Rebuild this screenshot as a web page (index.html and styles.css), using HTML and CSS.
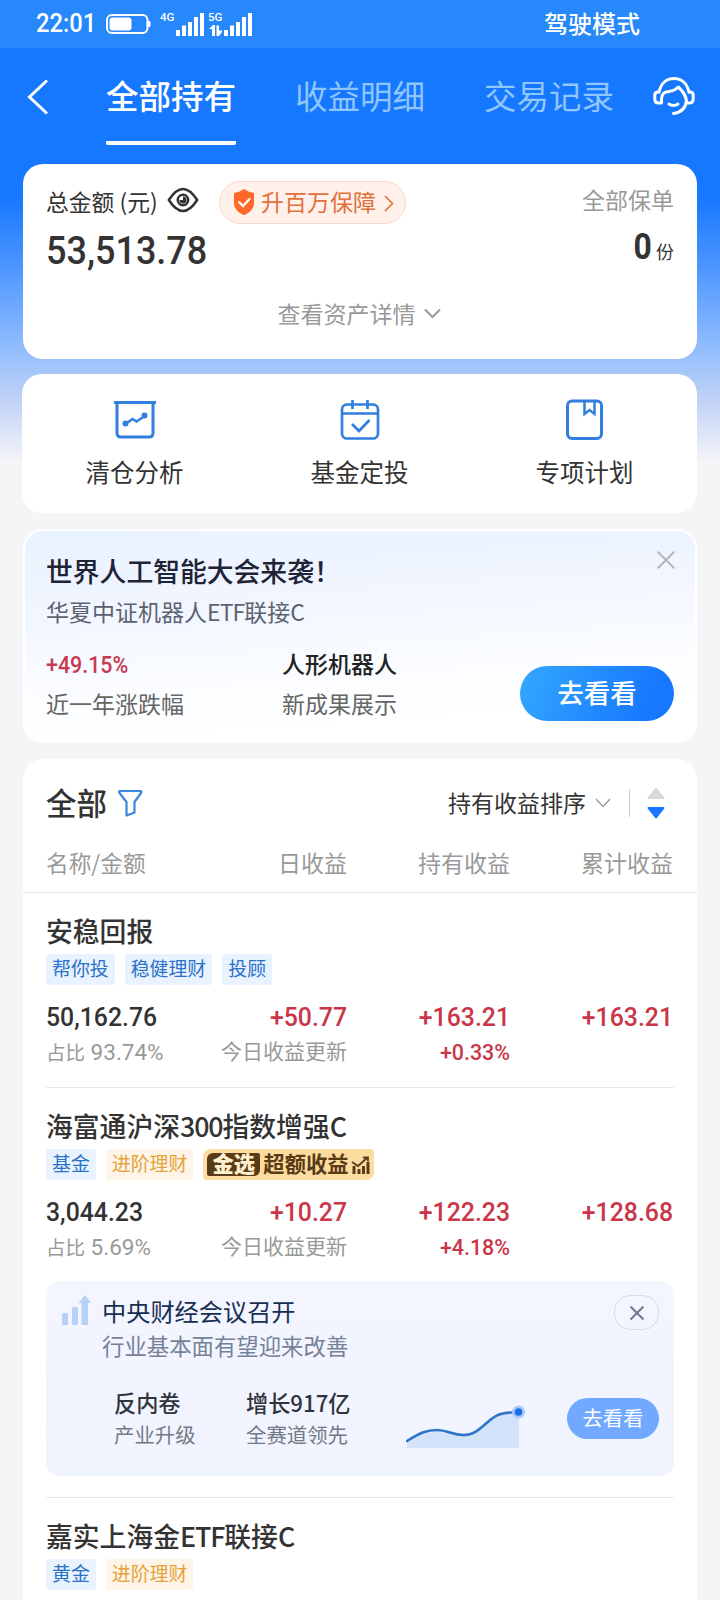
FILE: index.html
```html
<!DOCTYPE html>
<html lang="zh-CN">
<head>
<meta charset="utf-8">
<title>全部持有</title>
<link rel="stylesheet" href="styles.css">
</head>
<body>
<div class="screen">
  <div class="status">
    <span class="time">22:01</span>
    <svg class="signals" width="150" height="30" viewBox="0 0 150 30" fill="#fff">
      <rect x="1" y="6" width="40.500" height="18" rx="5" fill="none" stroke="#fff" stroke-width="2"/>
      <rect x="3.500" y="8.500" width="22" height="13" rx="3"/>
      <rect x="42" y="12" width="2.500" height="6" rx="1"/>
      <text x="54" y="12" class="net">4G</text>
      <path d="M70 21h4v6h-4zM76 16.500h4V27h-4zM82 13h4v14h-4zM88 8h4v19h-4zM94 4h4v23h-4z"/>
      <text x="102" y="12" class="net">5G</text>
      <path d="M103 20l4-4h2V27h-3v-7zM110.500 16.500h2.500v5h3v1.500l-3 4h-2.500z"/>
      <path d="M118 21h4v6h-4zM124 16.500h4V27h-4zM130 13h4v14h-4zM136 8h4v19h-4zM142 4h4v23h-4z"/>
    </svg>
    <span class="mode">驾驶模式</span>
  </div>

  <nav class="nav">
    <svg class="back" width="24" height="36" viewBox="0 0 24 36" fill="none" stroke="#fff" stroke-width="3"><path d="M22 1.500L4.500 18L22 34.500"/></svg>
    <span class="tab active">全部持有</span>
    <span class="tab">收益明细</span>
    <span class="tab">交易记录</span>
    <svg class="service" width="42" height="40" viewBox="0 0 42 40" fill="none" stroke="#fff" stroke-width="3" stroke-linecap="round" stroke-linejoin="round">
      <path d="M6 16C8 7 14 2.500 21 2.500S34 7 36 16"/>
      <path d="M6 16H5C2.500 16 1.800 17 1.800 19V23C1.800 25.500 3 27 5.500 27H8.500V23C9 17.500 11 16 16 15.500C20 15 23 13.500 25.500 11C29.500 15.500 32.500 18 33.500 25C32.500 32.500 28 36.500 20.500 37.500"/>
      <path d="M36 16H37C39.500 16 40.200 17 40.200 19V23C40.200 25.500 39 27 36.500 27H33.500"/>
      <path d="M16 28Q20.500 31 25 28"/>
    </svg>
  </nav>

  <main class="content">
    <section class="card total">
      <div class="total-row">
        <span class="t23 dark">总金额 (元)</span>
        <svg class="eye" width="32" height="26" viewBox="0 0 32 26" fill="none" stroke="#333" stroke-width="2.500" stroke-linejoin="round"><path d="M1.800 13C7 5 11.500 2 16 2S25 5 30.200 13C25 21 20.500 24 16 24S7 21 1.800 13Z"/><circle cx="16" cy="13" r="5.200"/><path d="M16 9.500v3.500h-3.500a3.500 3.500 0 1 0 3.500-3.500z" fill="#333" stroke="none"/></svg>
        <span class="protect">
          <svg width="22" height="26" viewBox="0 0 22 26"><path d="M11 0Q16 3.500 21 4V14C21 20 16 24 11 26C6 24 1 20 1 14V4Q6 3.500 11 0Z" fill="#ff6828"/><path d="M5.500 12.500l4.500 4.500l7-7.500" fill="none" stroke="#fff" stroke-width="2.300"/></svg>
          <span>升百万保障</span>
          <svg width="10" height="17" viewBox="0 0 10 17" fill="none" stroke="#e1703c" stroke-width="1.600"><path d="M1 1l7.500 7.500L1 16"/></svg>
        </span>
        <span class="t23 gray policy">全部保单</span>
      </div>
      <div class="amount-row"><span class="amount">53,513.78</span><span class="count"><b>0</b><i>份</i></span></div>
      <div class="detail"><span>查看资产详情</span><svg width="17" height="11" viewBox="0 0 17 11" fill="none" stroke="#999" stroke-width="2"><path d="M1 1.500l7.500 7.500L16 1.500"/></svg></div>
    </section>

    <section class="card tools">
      <div class="tool"><svg width="44" height="42" viewBox="0 0 44 42" fill="none" stroke="#327fdf" stroke-width="3"><path d="M1 3.500h42M4 4v30q0 4 4 4h28q4 0 4-4V4"/><path d="M12.500 25l7-5 4 2.500 9-6" stroke-width="2.500"/><circle cx="12.500" cy="24.500" r="1.500"/><circle cx="31.500" cy="16.500" r="1.500"/></svg><span>清仓分析</span></div>
      <div class="tool"><svg width="44" height="42" viewBox="0 0 44 42" fill="none" stroke="#327fdf" stroke-width="2.700"><rect x="4" y="5.500" width="36" height="34" rx="5"/><path d="M4 14.500h36M14.500 1v9M29.500 1v9M14 25l7 7 10.500-11"/></svg><span>基金定投</span></div>
      <div class="tool"><svg width="44" height="42" viewBox="0 0 44 42" fill="none" stroke="#327fdf" stroke-width="3"><rect x="4.500" y="2" width="34" height="37.500" rx="4.500"/><path d="M21.500 2v13l5-4 5 4V2" stroke-width="2.500"/></svg><span>专项计划</span></div>
    </section>

    <section class="card promo">
      <svg class="promo-close" width="18" height="18" viewBox="0 0 18 18" stroke="#b2b6c2" stroke-width="2"><path d="M.800.800l16.400 16.400M17.200.800L.800 17.200"/></svg>
      <h2>世界人工智能大会来袭！</h2>
      <p class="promo-sub">华夏中证机器人<span class="etf">ETF</span>联接<span class="etf">C</span></p>
      <div class="promo-grid">
        <div><div class="rate"><span class="din">+49.15%</span></div><div class="desc">近一年涨跌幅</div></div>
        <div><div class="topic">人形机器人</div><div class="desc">新成果展示</div></div>
        <span class="go">去看看</span>
      </div>
    </section>

    <section class="card list">
      <div class="list-head">
        <span class="all">全部</span>
        <svg width="25" height="28" viewBox="0 0 25 28" fill="none" stroke="#3b86e0" stroke-width="2.200" stroke-linejoin="round"><path d="M2 2H22.500Q24 2 23 4L16.500 13V23.500L8.500 26.500V13L1.500 4Q.500 2 2 2Z"/></svg>
        <span class="sort">持有收益排序</span>
        <svg class="sort-arrow" width="16" height="10" viewBox="0 0 16 10" fill="none" stroke="#999" stroke-width="1.300"><path d="M1 1l7 7.500L15 1"/></svg>
        <i class="bar"></i>
        <svg width="18" height="32" viewBox="0 0 18 32" stroke-width="2" stroke-linejoin="round"><path d="M9 1.500L16.500 11H1.500Z" fill="#d8d8d8" stroke="#d8d8d8"/><path d="M9 30.500L16.500 21H1.500Z" fill="#1677ff" stroke="#1677ff"/></svg>
      </div>
      <div class="cols heads"><span>名称/金额</span><span>日收益</span><span>持有收益</span><span>累计收益</span></div>

      <article class="fund first">
        <h3>安稳回报</h3>
        <div class="tags"><span class="tag">帮你投</span><span class="tag">稳健理财</span><span class="tag">投顾</span></div>
        <div class="cols nums"><span>50,162.76</span><span class="up">+50.77</span><span class="up">+163.21</span><span class="up">+163.21</span></div>
        <div class="cols subs"><span><em>占比</em> 93.74%</span><span class="update">今日收益更新</span><span class="pct">+0.33%</span></div>
      </article>

      <article class="fund">
        <h3>海富通沪深<span class="lat">300</span>指数增强<span class="lat">C</span></h3>
        <div class="tags"><span class="tag">基金</span><span class="tag gold">进阶理财</span><span class="pick"><b>金选</b><span>超额收益</span><svg width="19" height="18" viewBox="0 0 19 18" fill="none" stroke="#593b16"><path d="M3 10v8M8 13v5M12.500 10v8M17 6v12" stroke-width="3"/><path d="M1 6l6 4L16 2M12 1.500h5v4" stroke-width="1.800"/></svg></span></div>
        <div class="cols nums"><span>3,044.23</span><span class="up">+10.27</span><span class="up">+122.23</span><span class="up">+128.68</span></div>
        <div class="cols subs"><span><em>占比</em> 5.69%</span><span class="update">今日收益更新</span><span class="pct">+4.18%</span></div>
        <div class="news">
          <div class="news-top">
            <svg width="30" height="30" viewBox="0 0 30 30" fill="#b5d1f7"><path d="M1 20q0-2 2-2h2q2 0 2 2v12H1zM11 14q0-2 2-2h2q2 0 2 2v16h-6zM20.500 8h-3L24 0l6 8h-3v22h-6.500z"/></svg>
            <div><div class="news-title">中央财经会议召开</div><div class="news-sub">行业基本面有望迎来改善</div></div>
            <span class="news-close"><svg width="14" height="14" viewBox="0 0 14 14" stroke="#6c7891" stroke-width="2"><path d="M.500.500l13 13M13.500.500l-13 13"/></svg></span>
          </div>
          <div class="news-bottom">
            <div><div class="fact">反内卷</div><div class="fact-sub">产业升级</div></div>
            <div><div class="fact">增长917亿</div><div class="fact-sub">全赛道领先</div></div>
            <svg width="120" height="44" viewBox="0 0 120 44"><path d="M1 36C14 28 20 25 31 25C42 25 46 30 57 30C74 30 81 14 92 10C99 7 104 8 113 7V43H1Z" fill="#d3e3fa"/><path d="M1 36C14 28 20 25 31 25C42 25 46 30 57 30C74 30 81 14 92 10C99 7 104 8 113 7" fill="none" stroke="#2f74c8" stroke-width="2.600" stroke-linecap="round"/><circle cx="112.500" cy="7" r="6.500" fill="#a9c9f8"/><circle cx="112.500" cy="7" r="3.800" fill="#1b6ee6"/></svg>
            <span class="news-go">去看看</span>
          </div>
        </div>
      </article>

      <article class="fund">
        <h3>嘉实上海金<span class="lat">ETF</span>联接<span class="lat">C</span></h3>
        <div class="tags"><span class="tag">黄金</span><span class="tag gold">进阶理财</span></div>
      </article>
    </section>
  </main>
</div>
</body>
</html>
```

FILE: styles.css
```css
* { box-sizing: border-box; }
body, h2, h3, p { margin: 0; }
i, em { font-style: normal; }
svg { display: block; flex: none; }
body {
  font-family: "Noto Sans CJK SC", sans-serif;
  color: #333;
  background: #f5f4f7;
}
.screen {
  width: 720px;
  height: 1600px;
  overflow: hidden;
  background: linear-gradient(180deg, #1677ff 0, #1677ff 195px, #4b95ff 265px, #9fc5fb 365px, #b8cdf8 390px, #f5f4f7 462px);
}
.status {
  display: flex;
  align-items: center;
  height: 48px;
  padding-left: 36px;
  background: #2688fb;
  color: #fff;
}
.time { width: 70px; font: 500 25px/50px Roboto, sans-serif; transform: scaleX(.95); transform-origin: left; }
.signals { margin-top: -1px; }
.net { font: 500 11.500px Roboto, sans-serif; }
.mode { margin-left: 288px; font-size: 24px; font-weight: 500; line-height: 46px; padding-bottom: 2px; }

.nav { display: flex; height: 116px; padding-left: 25px; color: #fff; }
.back { margin: 31px 57px 0 0; }
.tab { width: 130px; height: 97px; margin-right: 59px; font-size: 32.500px; line-height: 94px; white-space: nowrap; color: #8ec6fd; }
.tab.active { color: #fff; font-weight: 500; border-bottom: 4px solid #fff; border-radius: 2px; }
.nav .tab:nth-of-type(3) { margin-right: 39px; }
.service { margin-top: 28px; }

.content { padding: 0 23px; }
.card { border-radius: 20px; background: #fff; }
.total { height: 195px; padding: 16px 23px 0; }
.total-row { display: flex; height: 44px; align-items: center; }
.t23 { font-size: 23px; line-height: 40px; }
.total-row .dark { width: 121px; white-space: nowrap; font-size: 22.800px; }
.gray { color: #999; }
.eye { margin-top: -4px; }
.protect {
  display: flex;
  align-items: center;
  width: 187px;
  height: 43px;
  margin-left: 20px;
  padding-left: 13px;
  border: 1px solid #f6d9d0;
  border-radius: 22px;
  background: #fff0ea;
  color: #e1703c;
  font-size: 23px;
  line-height: 38px;
}
.protect span { width: 129px; padding: 0 0 3px 6px; }
.protect svg:last-child { margin-top: 2px; }
.policy { margin: -7px 0 0 auto; }
.amount-row { display: flex; justify-content: space-between; height: 49px; }
.amount { font: 500 38.500px/53px Roboto, sans-serif; transform: scaleX(.935); transform-origin: left; }
.count { display: flex; font-size: 18px; line-height: 54px; }
.count b { font: 700 37px/46px Roboto, sans-serif; margin-right: 3px; transform: scaleX(.86); }
.detail { display: flex; align-items: center; justify-content: center; gap: 8px; height: 40px; margin: 20px 2px 0 0; font-size: 23px; line-height: 38px; color: #999; }

.tools { display: grid; grid-template-columns: repeat(3, 225px); height: 139px; margin-top: 15px; margin-left: -1px; margin-right: 1px; padding-top: 25px; width: 675px; }
.tool { display: flex; flex-direction: column; align-items: center; font-size: 24.500px; line-height: 36px; }
.tool span { margin-top: 13px; }

.promo {
  position: relative;
  height: 214px;
  margin-top: 16px;
  padding: 21px 21px 0;
  border: 2px solid #fff;
  background: linear-gradient(176deg, #e8f2ff 0, #f0f5ff 30%, #fafcff 62%, #fff 85%);
}
.promo-close { position: absolute; right: 20px; top: 20px; }
.promo h2 { height: 40px; font-size: 26.800px; font-weight: 500; line-height: 38px; color: #1e2435; }
.promo-sub { height: 46px; font-size: 23px; line-height: 38px; color: #5c6272; }
.etf { letter-spacing: -.900px; }
.promo-grid { display: grid; grid-template-columns: 236px 238px 154px; }
.rate { height: 40px; font: 500 23px/55px Roboto, sans-serif; color: #c73a4f; }
.din { display: inline-block; transform: scaleX(.93); transform-origin: left; }
.topic { height: 40px; font-size: 23px; font-weight: 500; line-height: 50px; color: #222; }
.desc { font-size: 23px; line-height: 50px; color: #666; }
.go {
  height: 55px;
  margin-top: 28px;
  border-radius: 28px;
  background: linear-gradient(110deg, #32a5ff 5%, #1677ff 85%);
  color: #fff;
  font-size: 26.500px;
  font-weight: 500;
  line-height: 51px;
  text-align: center;
}

.list { height: 900px; margin-top: 16px; }
.list-head { display: flex; align-items: center; height: 88px; padding: 0 32px 0 23px; }
.all { width: 72px; padding-bottom: 2px; font-size: 30.500px; font-weight: 500; line-height: 84px; }
.sort { margin-left: auto; padding-bottom: 2px; font-size: 23px; }
.sort-arrow { margin: 0 18px 0 9px; }
.bar { width: 1px; height: 28px; margin-right: 17px; background: #ccc; }
.cols { display: grid; grid-template-columns: 138px 163px 163px 163px; white-space: nowrap; }
.cols > span:not(:first-child) { text-align: right; }
.heads { height: 46px; padding-left: 23px; border-bottom: 1px solid #e7e7ec; font-size: 23px; line-height: 31px; color: #999; }
.heads span:first-child { font-size: 22.700px; }
.fund { margin: 0 23px; padding-top: 18px; border-top: 1px solid #e8e8ec; }
.fund.first { height: 194px; border-top: 0; }
.fund h3 { height: 43px; font-size: 26.800px; font-weight: 500; line-height: 40px; white-space: nowrap; }
.lat { letter-spacing: -1.100px; }
.tags { display: flex; height: 31px; }
.tag { height: 31px; margin-right: 10px; padding: 0 6px; border-radius: 3px; background: #e9f2ff; color: #2a73c8; font-size: 18.900px; line-height: 28px; }
.tag.gold { background: #fff4e8; color: #e4a338; }
.nums { height: 36px; margin-top: 14px; font: 500 26.700px/37px Roboto, sans-serif; }
.nums span { transform: scaleX(.93); transform-origin: right; }
.nums span:first-child { transform-origin: left; }
.up, .pct { color: #c93647; }
.subs { height: 37px; font: 400 22.500px/35px Roboto, "Noto Sans CJK SC", sans-serif; color: #999; }
.subs em { font-size: 19.500px; }
.update { font-family: "Noto Sans CJK SC", sans-serif; font-size: 21px; line-height: 31px; }
.pct { font-weight: 500; transform: scaleX(.95); transform-origin: right; }
.pick { display: flex; align-items: center; width: 171px; height: 31px; padding-left: 4px; border-radius: 8px 3px 8px 3px; background: #fcdc9f; color: #593b16; font-size: 21.300px; font-weight: 700; line-height: 26px; white-space: nowrap; }
.pick b { width: 53px; height: 23px; margin-right: 3px; border-radius: 6px 2px; background: #593b16; color: #fff0cf; line-height: 19px; text-align: center; }
.pick > span { width: 88px; padding-bottom: 3px; }

.news { height: 195px; margin: 14px 0 21px; padding: 14px 15px 0; border-radius: 14px; background: linear-gradient(180deg, #f3f5ff, #f0f4ff); }
.news-top { display: flex; }
.news-top > div { flex: 1; padding-left: 11px; }
.news-title { height: 34px; font-size: 24.200px; line-height: 31px; color: #172f53; }
.news-sub { height: 36px; font-size: 22.400px; line-height: 32px; color: #758298; }
.news-close { display: grid; place-items: center; width: 45px; height: 35px; border: 1.500px solid #d9dcea; border-radius: 16px; }
.news-bottom { display: grid; grid-template-columns: 132px 160px 161px 92px; padding-left: 53px; margin-top: 20px; }
.fact { height: 33px; font-size: 22.200px; font-weight: 500; line-height: 34px; color: #30343c; white-space: nowrap; }
.fact-sub { font-size: 20.400px; line-height: 32px; color: #747985; }
.news-bottom > svg { margin-top: 20px; }
.news-go { height: 41px; margin-top: 13px; border-radius: 21px; background: #70a9ff; color: #fff; font-size: 20.300px; line-height: 39px; text-align: center; }
```
